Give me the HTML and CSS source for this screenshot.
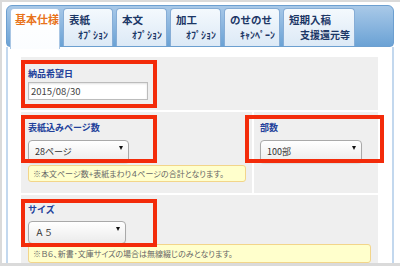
FILE: index.html
```html
<!DOCTYPE html>
<html lang="ja">
<head>
  <meta charset="UTF-8" />
  <title>基本仕様</title>
  <link rel="stylesheet" href="styles.css">
</head>
<body>
  <div class="frame">
    <ul class="tabs">
      <li class="tab tab-basic is-active"><span class="tab-main">基本仕様</span></li>
      <li class="tab tab-cover"><span class="tab-main">表紙</span><span class="tab-sub">ｵﾌﾟｼｮﾝ</span></li>
      <li class="tab tab-body"><span class="tab-main">本文</span><span class="tab-sub">ｵﾌﾟｼｮﾝ</span></li>
      <li class="tab tab-finish"><span class="tab-main">加工</span><span class="tab-sub">ｵﾌﾟｼｮﾝ</span></li>
      <li class="tab tab-campaign"><span class="tab-main">のせのせ</span><span class="tab-sub">ｷｬﾝﾍﾟｰﾝ</span></li>
      <li class="tab tab-rush"><span class="tab-main">短期入稿</span><span class="tab-sub tab-sub-big">支援還元等</span></li>
    </ul>

    <div class="panel">
      <div class="row">
        <div class="field field-date mark">
          <div class="label">納品希望日</div>
          <input class="text-input" type="text" value="2015/08/30">
        </div>
      </div>

      <div class="row-split">
        <div class="cell">
          <div class="field field-pages mark">
            <div class="label">表紙込みページ数</div>
            <div class="select select-pages"><select><option>28ページ</option></select></div>
          </div>
          <div class="note">※本文ページ数+表紙まわり４ページの合計となります。</div>
        </div>
        <div class="cell cell-right">
          <div class="field field-copies mark">
            <div class="label">部数</div>
            <div class="select select-copies"><select><option>100部</option></select></div>
          </div>
        </div>
      </div>

      <div class="row row-size">
        <div class="field field-size mark">
          <div class="label">サイズ</div>
          <div class="select select-size"><select><option>Ａ５</option></select></div>
        </div>
        <div class="note note-wide">※Ｂ６、新書･文庫サイズの場合は無線綴じのみとなります。</div>
      </div>
    </div>
  </div>
</body>
</html>
```

FILE: styles.css
```css
* {
  box-sizing: border-box;
}

body {
  margin: 0;
  font-family: "Noto Sans CJK JP", "Noto Sans", sans-serif;
  background: #fff;
}

.frame {
  width: 400px;
  height: 266px;
  overflow: hidden;
  display: flex;
  flex-direction: column;
  border-top: 2px solid #dadada;
  border-left: 2px solid #dadada;
  border-bottom: 3px solid #dadada;
  padding: 3px 6px 0 4px;
}

/* tab bar */
.tabs {
  list-style: none;
  margin: 0;
  flex: none;
  display: flex;
  align-items: flex-start;
  gap: 3px;
  height: 42px;
  padding: 2px 3px 0;
  background: linear-gradient(#a9c9e8, #6ba2d5);
  border: 1px solid #6c9fd0;
  border-radius: 6px 6px 4px 4px;
}

.tab {
  height: 38px;
  display: flex;
  flex-direction: column;
  padding: 4px 4px 0 5px;
  border: 1px solid #86add6;
  border-bottom: none;
  border-radius: 4px 4px 0 0;
  background: linear-gradient(#f4f9fd, #dce9f6);
  color: #1c3766;
  font-weight: bold;
}

.tab.is-active {
  height: 41px;
  position: relative;
  z-index: 1;
  padding-left: 4px;
  border-color: #a9c6e4;
  background: linear-gradient(#ffffff, #fbfdff);
  color: #e8731b;
}

.tab-basic { width: 50px; }
.tab-cover { width: 50px; }
.tab-body { width: 51px; }
.tab-finish { width: 51px; }
.tab-campaign { width: 56px; }
.tab-rush { width: 72px; }

.tab-main {
  font-size: 10.5px;
  line-height: 13px;
  white-space: nowrap;
}

.is-active .tab-main {
  font-size: 11px;
}

.tab-sub {
  margin-top: 3px;
  font-size: 10px;
  line-height: 12px;
  text-align: right;
  white-space: nowrap;
}

/* content */
.panel {
  flex: 1;
  display: flex;
  flex-direction: column;
  gap: 2px;
  padding: 10px 14px 0 13px;
  border-left: 2px solid #c3d8ee;
  border-right: 2px solid #c3d8ee;
}

.row {
  background: #efefef;
  padding: 10px 7px;
}

.row-size {
  padding-top: 8px;
  flex: 1;
}

.row-split {
  display: grid;
  grid-template-columns: 231px 1fr;
  gap: 2px;
}

.cell {
  background: #efefef;
  padding: 9px 6px 11px 7px;
}

.cell-right {
  padding-left: 6px;
}

.field {
  width: 122px;
}

.label {
  font-size: 9px;
  line-height: 14px;
  font-weight: bold;
  color: #21409a;
}

.text-input {
  display: block;
  width: 120px;
  height: 18px;
  margin: 1px 0 0;
  padding: 0 2px;
  border: 1px solid #bcbcbc;
  border-radius: 0;
  box-shadow: inset 0 1px 2px rgba(0, 0, 0, 0.12);
  font-family: inherit;
  font-size: 9.5px;
  color: #444;
  background: #fff;
}

.select {
  position: relative;
  height: 23px;
  margin-top: 1px;
}

.select select {
  appearance: none;
  width: 100%;
  height: 100%;
  padding: 0 0 0 6px;
  border: 1px solid #a9a9a9;
  border-radius: 4px;
  background: linear-gradient(#ffffff, #ebebeb);
  box-shadow: 0 1px 1px rgba(0, 0, 0, 0.08);
  font-family: inherit;
  font-size: 9px;
  color: #333;
}

.select::after {
  content: "";
  position: absolute;
  right: 6px;
  top: 10px;
  border-left: 2.5px solid transparent;
  border-right: 2.5px solid transparent;
  border-top: 4px solid #111;
}

.select-pages { width: 101px; }
.select-copies { width: 102px; }
.select-size { width: 98px; margin-top: 0; }

.field-copies {
  width: 102px;
}

.note {
  margin-top: 6px;
  height: 17px;
  padding-left: 4px;
  background: #ffffcc;
  border: 1px solid #f2d58a;
  border-radius: 3px;
  font-size: 8px;
  line-height: 15px;
  color: #666;
  white-space: nowrap;
  font-feature-settings: "palt";
}

.note-wide {
  margin-top: 4px;
  height: 19px;
  line-height: 17px;
}

/* red annotation frames drawn over the fields */
.mark {
  position: relative;
}

.mark::after {
  content: "";
  position: absolute;
  border: 4px solid #f32b0a;
  pointer-events: none;
}

.field-date::after { top: -7px; bottom: -8px; left: -7px; right: -7px; }
.field-pages::after { top: -6px; bottom: -4px; left: -7px; right: -7px; }
.field-copies::after { top: -6px; bottom: -4px; left: -15px; right: -22px; }
.field-size::after { top: -4px; bottom: -7px; left: -7px; right: -7px; }
```
